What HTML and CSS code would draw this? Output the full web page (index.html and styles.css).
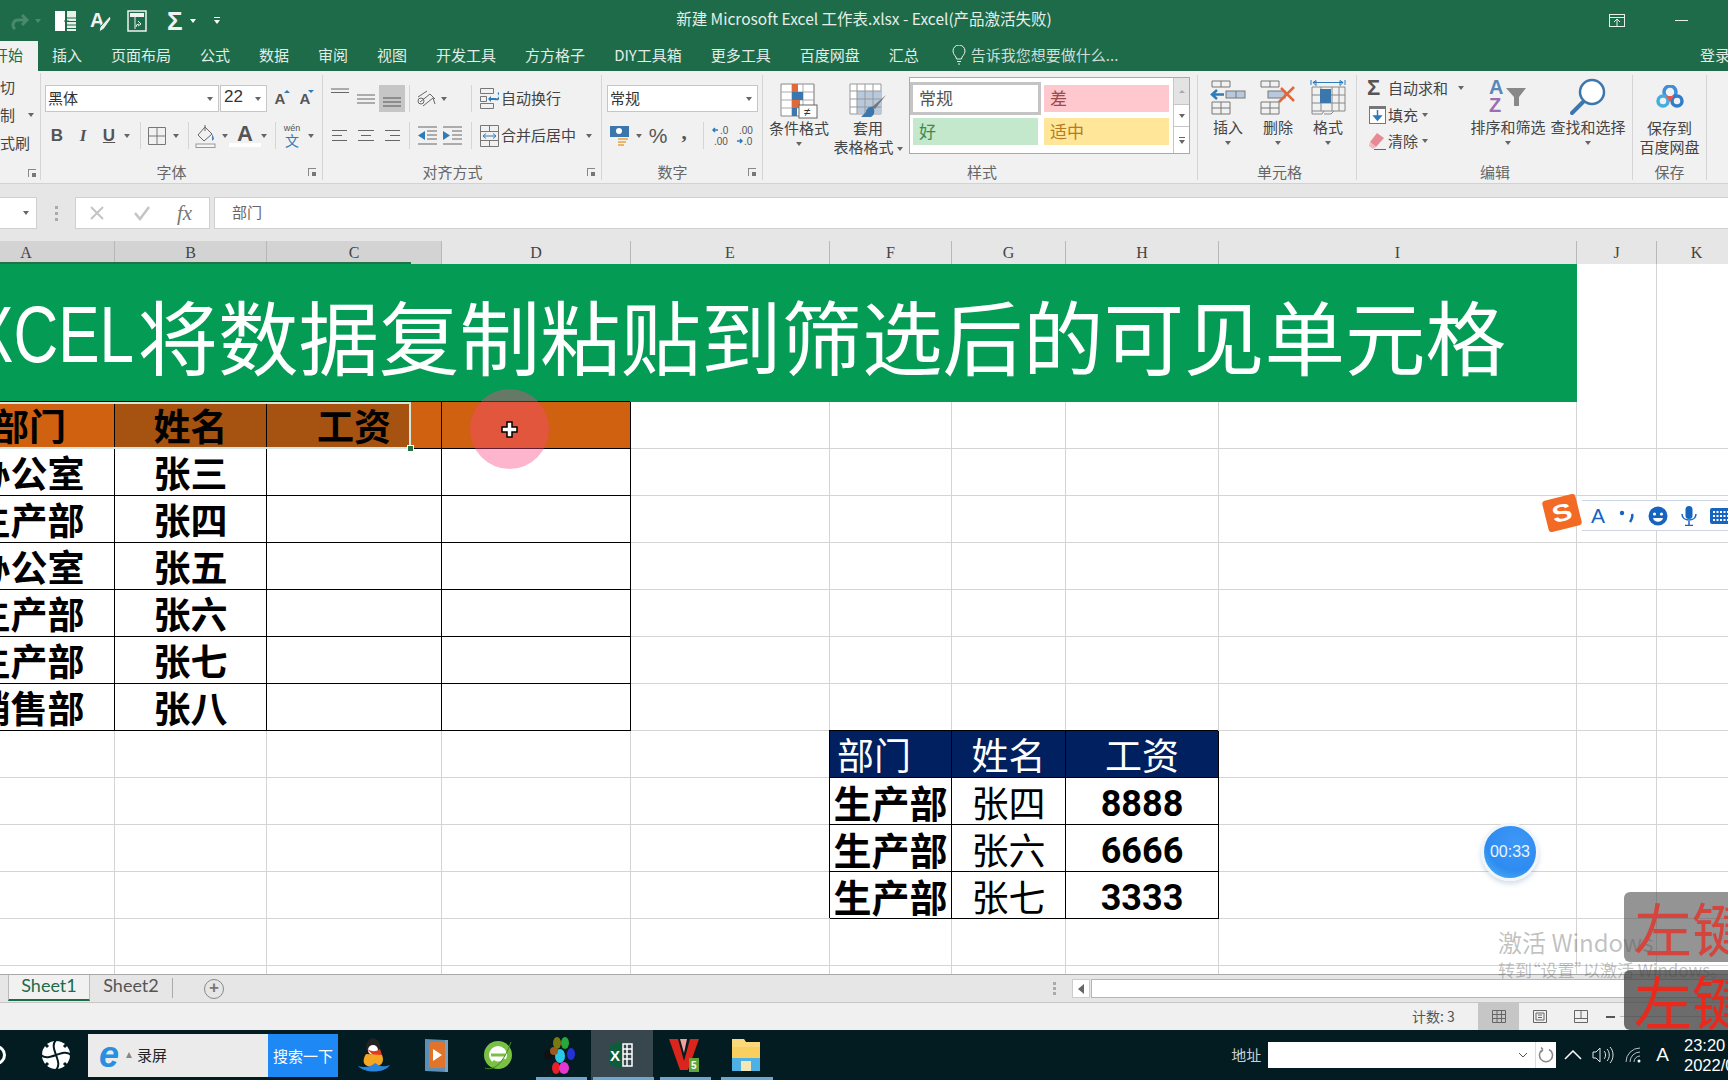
FILE: index.html
```html
<!DOCTYPE html>
<html lang="zh">
<head>
<meta charset="utf-8">
<title>新建 Microsoft Excel 工作表.xlsx - Excel</title>
<link rel="stylesheet" href="styles.css">
</head>
<body>
<header class="titlebar">
  <div class="qat">
    <svg class="q-redo" width="20" height="18" viewBox="0 0 20 18"><path d="M16 8H8a5 5 0 0 0-3 9M12 3l5 5-5 5" fill="none" stroke="#4a8a6c" stroke-width="3"/></svg>
    <i class="dd dd-faded q-ddf"></i>
    <svg class="q-ins" width="22" height="20" viewBox="0 0 22 20"><rect x="0" y="0" width="10" height="20" fill="#fff"/><rect x="12" y="0" width="9" height="20" fill="#e8f0ec"/><path d="M12 7h9M12 10.500h9M12 14h9M12 17.500h9" stroke="#1d6b48"/><path d="M9 10h5M11.500 7.500v5" stroke="#1d6b48"/></svg>
    <svg class="q-a" width="22" height="22" viewBox="0 0 22 22"><text x="0" y="17" class="q-atext">A</text><path d="M20 6 10 17l-1 5 5-3L21 9z" fill="#e8f0ec" stroke="#1d6b48"/></svg>
    <svg class="q-box" width="20" height="22" viewBox="0 0 20 22"><rect x="1" y="1" width="18" height="20" fill="none" stroke="#f2f2f2" stroke-width="1.500"/><rect x="3" y="3" width="14" height="4" fill="#f2f2f2"/><path d="M8 7v12M12 14a3 3 0 0 0-3 3M11 11l3 3-3 2" fill="none" stroke="#f2f2f2"/></svg>
    <span class="q-sigma">Σ</span>
    <i class="dd dd-white q-dd1"></i>
    <svg class="q-more" width="8" height="9" viewBox="0 0 8 9"><path d="M1 1.500h6" stroke="#fff"/><path d="M1 4l3 4 3-4z" fill="#fff"/></svg>
  </div>
  <div class="doc-title">新建 Microsoft Excel 工作表.xlsx - Excel(产品激活失败)</div>
  <div class="winctl">
    <svg width="16" height="13" viewBox="0 0 16 13"><rect x=".5" y=".5" width="15" height="12" fill="none" stroke="#e8f0ec"/><path d="M.5 3.500h15M8 12V5M5 8l3-3 3 3" fill="none" stroke="#e8f0ec"/></svg>
    <span class="w-min"></span>
  </div>
</header>
<nav class="tabs">
  <span class="tab-active">开始</span>
  <span>插入</span><span>页面布局</span><span>公式</span><span>数据</span><span>审阅</span><span>视图</span><span>开发工具</span><span>方方格子</span><span>DIY工具箱</span><span>更多工具</span><span>百度网盘</span><span>汇总</span>
  <span class="tell">
    <svg width="14" height="20" viewBox="0 0 14 20"><path d="M4.500 14c0-3-3.500-4-3.500-8a6 6 0 0 1 12 0c0 4-3.500 5-3.500 8zM5 16.500h4M6 19h2" fill="none" stroke="#e8f0ec"/></svg>
    告诉我您想要做什么...
  </span>
  <span class="login">登录</span>
</nav>

<section class="ribbon">
  <div class="grp g-clip">
    <div class="clip-row">切</div>
    <div class="clip-row">制<i class="dd clip-dd"></i></div>
    <div class="clip-row">式刷</div>
    <i class="launch launch-clip"></i>
  </div>

  <div class="grp g-font">
    <div class="row row1">
      <div class="combo c-font"><span>黑体</span><i class="dd"></i></div>
      <div class="combo c-size"><span>22</span><i class="dd"></i></div>
      <span class="s s26 glyph-a">A<i class="up"></i></span>
      <span class="s s24 glyph-a">A<i class="down"></i></span>
    </div>
    <div class="row row2">
      <span class="s s24 fmt b">B</span>
      <span class="s s28 fmt it">I</span>
      <span class="s s24 fmt un">U</span>
      <span class="s s12"><i class="dd"></i></span>
      <span class="s s14"><i class="vl"></i></span>
      <span class="s s20"><svg width="18" height="18" viewBox="0 0 18 18"><path d="M.5.500h17v17H.5zM9 .5v17M.5 9h17" fill="none" stroke="#777"/></svg></span>
      <span class="s s18"><i class="dd"></i></span>
      <span class="s s6"><i class="vl"></i></span>
      <span class="s s30"><svg width="22" height="24" viewBox="0 0 22 24"><path d="M10 3 3 11l6 6 8-7zM10 1v6" fill="none" stroke="#666"/><path d="M17 10c2 3 2 5 2 5l-2 2z" fill="#4f81bd"/><rect x="1" y="20" width="19" height="3.500" fill="#f5f5f5" stroke="#999"/></svg></span>
      <span class="s s8"><i class="dd"></i></span>
      <span class="s s32 font-a">A</span>
      <span class="s s6"><i class="dd"></i></span>
      <span class="s s16"><i class="vl"></i></span>
      <span class="s s18 wen"><small>wén</small><b>文</b></span>
      <span class="s s20"><i class="dd"></i></span>
    </div>
    <div class="glabel pr">字体<i class="launch"></i></div>
  </div>

  <div class="grp g-align">
    <div class="row row1">
      <span class="s s24"><svg width="18" height="12" viewBox="0 0 18 12" class="up7"><path d="M0 1h18M0 4.500h18" stroke="#666"/></svg></span>
      <span class="s s27"><svg width="18" height="12" viewBox="0 0 18 12"><path d="M0 2h18M0 6h18M0 10h18" stroke="#666"/></svg></span>
      <span class="s s26 on"><svg width="18" height="12" viewBox="0 0 18 12" class="down5"><path d="M0 3h18M0 7h18M0 11h18" stroke="#555"/></svg></span>
      <span class="s s8"><i class="vl"></i></span>
      <span class="s s26"><svg width="20" height="20" viewBox="0 0 20 20"><path d="M2 8l9-6M4 13 14 5M7 17l10-8 2 6M14 5l5 5" fill="none" stroke="#666"/><circle cx="5" cy="12" r="3" fill="none" stroke="#666"/></svg></span>
      <span class="s s10"><i class="dd"></i></span>
      <span class="s s14"></span>
      <span class="s s16"><i class="vl"></i></span>
      <span class="s s20"><svg width="19" height="22" viewBox="0 0 19 22"><path d="M.5.500h13v5H.5zM.5 8.500h6v5h-6zM.5 15.500h13v5H.5z" fill="none" stroke="#777"/><path d="M9 11h6a3 3 0 0 0 3-6" fill="none" stroke="#2d7bb8" stroke-width="2"/><path d="M11 8l-3 3 3 3" fill="#2d7bb8"/></svg></span>
      <span class="lbl">自动换行</span>
    </div>
    <div class="row row2">
      <span class="s s24"><svg width="16" height="11" viewBox="0 0 16 11"><path d="M0 .5h15M0 5.500h10M0 10.500h15" stroke="#666"/></svg></span>
      <span class="s s27"><svg width="16" height="11" viewBox="0 0 16 11"><path d="M0 .5h16M3 5.500h10M0 10.500h16" stroke="#666"/></svg></span>
      <span class="s s26"><svg width="16" height="11" viewBox="0 0 16 11"><path d="M1 .5h15M6 5.500h10M1 10.500h15" stroke="#666"/></svg></span>
      <span class="s s8"><i class="vl"></i></span>
      <span class="s s28"><svg width="19" height="19" viewBox="0 0 19 19"><path d="M0 1h19M9 5h10M9 9h10M9 13h10M0 18h19" stroke="#666"/><path d="M0 9.500 7 5v9z" fill="#2d7bb8"/></svg></span>
      <span class="s s22"><svg width="19" height="19" viewBox="0 0 19 19"><path d="M0 1h19M9 5h10M9 9h10M9 13h10M0 18h19" stroke="#666"/><path d="M7 9.500 0 5v9z" fill="#2d7bb8"/></svg></span>
      <span class="s s16"><i class="vl"></i></span>
      <span class="s s20"><svg width="19" height="22" viewBox="0 0 19 22"><path d="M.5.500h18v21H.5zM.5 6.500h18M.5 15.500h18M9.500 .5v6M9.500 15.500v6" fill="none" stroke="#777"/><path d="M3 11h13M6 8.500 3 11l3 2.500M13 8.500l3 2.500-3 2.500" fill="none" stroke="#2d7bb8"/></svg></span>
      <span class="lbl">合并后居中</span>
      <i class="dd dd-merge"></i>
    </div>
    <div class="glabel pr">对齐方式<i class="launch"></i></div>
  </div>

  <div class="grp g-num">
    <div class="row row1">
      <div class="combo c-num"><span>常规</span><i class="dd"></i></div>
    </div>
    <div class="row row2">
      <span class="s s26"><svg width="20" height="22" viewBox="0 0 20 22"><rect x="0" y="1" width="19" height="11" fill="#3b77ad"/><circle cx="9" cy="6" r="3" fill="#fff"/><path d="M8 14h10M8 17h8M8 20h6" stroke="#ecb56a" stroke-width="2"/></svg></span>
      <span class="s s12"><i class="dd"></i></span>
      <span class="s s26 pct">%</span>
      <span class="s s26 comma">,</span>
      <span class="s s12"><i class="vl"></i></span>
      <span class="s s24 dec"><svg width="18" height="22" viewBox="0 0 18 22"><path d="M6 5H1M3 3 1 5l2 2" fill="none" stroke="#2d7bb8" stroke-width="1.500"/><text x="8" y="9" class="dectext">.0</text><text x="2" y="20" class="dectext">.00</text></svg></span>
      <span class="s s24 dec"><svg width="18" height="22" viewBox="0 0 18 22"><text x="3" y="9" class="dectext">.00</text><path d="M1 16h5M4 14l2 2-2 2" fill="none" stroke="#2d7bb8" stroke-width="1.500"/><text x="8" y="20" class="dectext">.0</text></svg></span>
    </div>
    <div class="glabel pr">数字<i class="launch"></i></div>
  </div>

  <div class="grp g-style">
    <div class="style-row">
      <div class="bigbtn w64">
        <svg class="bigicon" width="38" height="36" viewBox="0 0 38 36"><path d="M1 1h33v32H1z" fill="#fff" stroke="#888"/><path d="M12 1v32M23 1v32M34 1v32M1 9h33M1 17h33M1 25h33" stroke="#aaa"/><rect x="12" y="1" width="6" height="8" fill="#e0693c"/><rect x="12" y="9" width="11" height="8" fill="#3b77ad"/><rect x="12" y="17" width="8" height="8" fill="#e0693c"/><rect x="12" y="25" width="5" height="8" fill="#3b77ad"/><rect x="19" y="22" width="18" height="13" fill="#fff" stroke="#666"/><text x="24" y="33" class="ne">≠</text></svg>
        <span>条件格式</span>
        <i class="dd dd-line"></i>
      </div>
      <div class="bigbtn w74">
        <svg class="bigicon" width="38" height="36" viewBox="0 0 38 36"><path d="M1 1h31v30H1z" fill="#fff" stroke="#999"/><rect x="8" y="8" width="24" height="23" fill="#b9c9dd"/><path d="M8 1v30M16 1v30M24 1v30M1 8h31M1 16h31M1 24h31" stroke="#999"/><path d="M37 12 26 26l-3-2z" fill="#777"/><path d="M24 24c-5-1-7 3-7 5l-5 5h10c4-2 4-7 2-10z" fill="#3b77ad"/></svg>
        <span>套用</span>
        <span>表格格式<i class="dd dd-inline"></i></span>
      </div>
      <div class="gallery">
        <div class="g-cells">
          <div class="cellstyle cs-normal">常规</div>
          <div class="cellstyle cs-bad">差</div>
          <div class="cellstyle cs-good">好</div>
          <div class="cellstyle cs-mid">适中</div>
        </div>
        <div class="g-scroll">
          <span class="gs1"><i class="dd dd-faded-up"></i></span>
          <span class="gs2"><i class="dd"></i></span>
          <span class="gs3"><svg width="8" height="9" viewBox="0 0 8 9"><path d="M1 1.500h6" stroke="#666"/><path d="M1 4l3 4 3-4z" fill="#666"/></svg></span>
        </div>
      </div>
    </div>
    <div class="glabel">样式</div>
  </div>

  <div class="grp g-cells-grp">
    <div class="style-row">
      <div class="bigbtn w50">
        <svg class="bigicon2" width="38" height="38" viewBox="0 0 38 38"><path d="M3 3h18v6H3zM12 3v6M3 24h18v12H3zM3 30h18M12 24v12" fill="none" stroke="#777"/><rect x="17" y="13" width="19" height="7" fill="#b9c9dd" stroke="#777"/><path d="M27 13v7" stroke="#777"/><path d="M15 16.500H5M8 12l-5 4.500L8 21" fill="none" stroke="#2d7bb8" stroke-width="2.500"/></svg>
        <span>插入</span><i class="dd dd-line"></i>
      </div>
      <div class="bigbtn w50">
        <svg class="bigicon2" width="38" height="38" viewBox="0 0 38 38"><path d="M2 3h18v6H2zM11 3v6M2 24h18v12H2zM2 30h18M11 24v12" fill="none" stroke="#777"/><rect x="9" y="13" width="17" height="7" fill="#b9c9dd" stroke="#777"/><path d="M22 10l13 13M35 9 20 24" stroke="#e0693c" stroke-width="2.500"/></svg>
        <span>删除</span><i class="dd dd-line"></i>
      </div>
      <div class="bigbtn w50">
        <svg class="bigicon2" width="38" height="38" viewBox="0 0 38 38"><path d="M2 2v5M36 2v5M4 4.500h30M4 4.500l3-2v5zM34 4.500l-3-2v5z" fill="none" stroke="#2d7bb8"/><path d="M3 9h33v24H3zM3 17h33M3 25h33M12 9v24M23 9v24M30 9v24" fill="none" stroke="#888"/><rect x="11" y="11" width="11" height="14" fill="#3b77ad"/><path d="M3 33v3h10l2-3M15 36h7l3-3" fill="none" stroke="#888"/></svg>
        <span>格式</span><i class="dd dd-line"></i>
      </div>
    </div>
    <div class="glabel">单元格</div>
  </div>

  <div class="grp g-edit">
    <div class="style-row">
      <div class="edit-col">
        <div class="edit-item"><span class="s s22 sigma">Σ</span><span>自动求和</span><i class="dd dd-auto"></i></div>
        <div class="edit-item"><span class="s s22"><svg width="17" height="18" viewBox="0 0 17 18"><rect x=".5" y=".5" width="16" height="17" fill="#fff" stroke="#777"/><rect x="1" y="1" width="15" height="2" fill="#777"/><path d="M8.500 4v9M5 10l3.500 4 3.500-4z" fill="#2d7bb8" stroke="#2d7bb8" stroke-width="1.500"/></svg></span><span>填充</span><i class="dd dd-after"></i></div>
        <div class="edit-item"><span class="s s22"><svg width="18" height="18" viewBox="0 0 18 18"><path d="M9 1l7 5-8 9-6-5z" fill="#e88a96"/><path d="M2 10l6 5-3 2-4-3z" fill="#f2b6bd"/><path d="M6 17.500h12" stroke="#666"/></svg></span><span>清除</span><i class="dd dd-after"></i></div>
      </div>
      <div class="bigbtn w80">
        <svg class="bigicon2 sorticon" width="40" height="38" viewBox="0 0 40 38"><text x="1" y="16" class="az az-a">A</text><text x="1" y="34" class="az az-z">Z</text><path d="M18 10h20l-7 9v9h-5v-9z" fill="#888"/></svg>
        <span>排序和筛选</span><i class="dd dd-line"></i>
      </div>
      <div class="bigbtn w80">
        <svg class="bigicon2" width="38" height="38" viewBox="0 0 38 38"><circle cx="23" cy="14" r="12" fill="#fff" stroke="#3b77ad" stroke-width="2.500"/><path d="M14 24 3 35" stroke="#3b77ad" stroke-width="4" stroke-linecap="round"/></svg>
        <span>查找和选择</span><i class="dd dd-line"></i>
      </div>
    </div>
    <div class="glabel">编辑</div>
  </div>

  <div class="grp g-save">
    <div class="bigbtn save">
      <svg class="saveicon" width="28" height="24" viewBox="0 0 28 24"><circle cx="14" cy="7" r="6" fill="none" stroke="#3f8fd8" stroke-width="3.500"/><circle cx="7" cy="16" r="5" fill="none" stroke="#45aee0" stroke-width="3.500"/><circle cx="21" cy="16" r="5" fill="none" stroke="#2f7ec9" stroke-width="3.500"/><path d="M10 11h8l-4 6z" fill="#e4584f"/></svg>
      <span>保存到</span>
      <span>百度网盘</span>
    </div>
    <div class="glabel">保存</div>
  </div>
</section>

<section class="formula">
  <div class="namebox"><i class="dd"></i></div>
  <div class="fdots"><i></i><i></i><i></i></div>
  <div class="fbtns">
    <svg width="16" height="16" viewBox="0 0 16 16"><path d="M2 2l12 12M14 2 2 14" stroke="#c4c4c4" stroke-width="2"/></svg>
    <svg width="18" height="16" viewBox="0 0 18 16"><path d="M2 8l5 6L16 2" fill="none" stroke="#c4c4c4" stroke-width="2.500"/></svg>
    <span class="fx">fx</span>
  </div>
  <div class="finput">部门</div>
</section>

<section class="colhdr">
  <span class="ch sel ch-a">A</span><span class="ch sel">B</span><span class="ch sel">C</span><span class="ch">D</span><span class="ch">E</span><span class="ch">F</span><span class="ch">G</span><span class="ch">H</span><span class="ch">I</span><span class="ch">J</span><span class="ch">K</span>
  <i class="colmark"></i>
</section>

<main class="sheet">
  <div class="cells">
    <div class="banner"><span class="ban-lat">EXCEL</span>将数据复制粘贴到筛选后的可见单元格</div>

    <div class="t th c1">部门</div><div class="t th dark">姓名</div><div class="t th dark part">工资</div><div class="t th"></div>
    <div class="t c1">办公室</div><div class="t">张三</div><div class="t"></div><div class="t"></div>
    <div class="t c1">生产部</div><div class="t">张四</div><div class="t"></div><div class="t"></div>
    <div class="t c1">办公室</div><div class="t">张五</div><div class="t"></div><div class="t"></div>
    <div class="t c1">生产部</div><div class="t">张六</div><div class="t"></div><div class="t"></div>
    <div class="t c1">生产部</div><div class="t">张七</div><div class="t"></div><div class="t"></div>
    <div class="t c1">销售部</div><div class="t">张八</div><div class="t"></div><div class="t"></div>

    <div class="table2">
      <div class="t navy navy-first">部门</div><div class="t navy">姓名</div><div class="t navy">工资</div>
      <div class="t dept">生产部</div><div class="t thin">张四</div><div class="t num">8888</div>
      <div class="t dept">生产部</div><div class="t thin">张六</div><div class="t num">6666</div>
      <div class="t dept">生产部</div><div class="t thin">张七</div><div class="t num">3333</div>
    </div>
  </div>
  <div class="selection"><i></i></div>
  <div class="spot"></div>
  <svg class="cursor" width="17" height="17" viewBox="0 0 17 17"><path d="M6 1h5v5h5v5h-5v5H6v-5H1V6h5z" fill="#fff" stroke="#000" stroke-width="1.500"/></svg>
</main>

<section class="sheetbar">
  <span class="sheet-tab active">Sheet1</span>
  <span class="sheet-tab">Sheet2</span>
  <i class="tab-sep"></i>
  <span class="addsheet">+</span>
  <span class="sb-dots"><i></i><i></i><i></i></span>
  <span class="sb-left"><i></i></span>
  <span class="sb-track"></span>
</section>

<section class="status">
  <span class="count">计数: 3</span>
  <span class="view on"><svg width="14" height="13" viewBox="0 0 14 13"><path d="M.5.500h13v12H.5zM.5 4.500h13M.5 8.500h13M5 .5v12M9.500 .5v12" fill="none" stroke="#666"/></svg></span>
  <span class="view"><svg width="14" height="13" viewBox="0 0 14 13"><path d="M.5.500h13v12H.5z" fill="none" stroke="#666"/><path d="M3 3h8v7H3zM5 5h4M5 7.500h4" fill="none" stroke="#666"/></svg></span>
  <span class="view"><svg width="14" height="13" viewBox="0 0 14 13"><path d="M.5.500h13v12H.5zM.5 8.500h13M7 .5v8" fill="none" stroke="#666"/></svg></span>
  <span class="zoom-minus"></span>
  <span class="zoom-line"></span>
</section>

<footer class="taskbar">
  <div class="start"></div>
  <svg class="swirl" width="30" height="30" viewBox="0 0 30 30"><circle cx="15" cy="15" r="14" fill="#fff"/><path d="M15 0C7 8 23 22 15 30M0 15c8 8 22-8 30 0" fill="none" stroke="#031c22" stroke-width="2"/><path d="M0 0l7 7M30 0l-7 7M0 30l7-7M30 30l-7-7" stroke="#031c22" stroke-width="3"/></svg>
  <div class="search">
    <span class="ie">e</span><i class="tri"></i>
    <span class="s-text">录屏</span>
    <span class="s-btn">搜索一下</span>
  </div>
  <div class="apps">
    <span class="app"><svg width="32" height="38" viewBox="0 0 32 38"><ellipse cx="15" cy="11" rx="7" ry="9" fill="#222"/><ellipse cx="15" cy="14" rx="5" ry="5" fill="#fff"/><path d="M9 13c6 3 8 3 13 0l2 6-6 3z" fill="#e53a1f"/><path d="M8 18c-5 8-2 13 7 13 8 0 12-5 9-12z" fill="#f5a623"/><path d="M0 30c6 7 26 8 32-1-8 3-12 0-15-2-4 4-11 5-17 3z" fill="#2a86dc"/></svg></span>
    <span class="app"><svg width="26" height="36" viewBox="0 0 26 36"><path d="M2 2l20 1v32L2 34z" fill="#5d8eb5"/><rect x="6" y="5" width="16" height="26" rx="2" fill="#e0742a"/><path d="M10 12l9 6-9 6z" fill="#fff"/><rect x="22" y="3" width="3" height="32" fill="#7aa2c2"/></svg></span>
    <span class="app"><svg width="30" height="34" viewBox="0 0 30 34"><circle cx="15" cy="17" r="14" fill="#79c043"/><circle cx="15" cy="17" r="9" fill="#fff"/><path d="M8 17h14M22 21c-3 5-9 5-12 2" stroke="#79c043" stroke-width="3" fill="none"/><path d="M2 30c8 3 18-3 26-26" stroke="#3e8c1e" fill="none"/></svg></span>
    <span class="app"><svg width="32" height="40" viewBox="0 0 32 40"><ellipse cx="13" cy="8" rx="4" ry="6" fill="#7b7a10"/><ellipse cx="21" cy="8" rx="4" ry="6" fill="#26a83b"/><ellipse cx="4" cy="20" rx="4" ry="5" fill="#111"/><ellipse cx="16" cy="21" rx="5" ry="7" fill="#29c7e8"/><ellipse cx="27" cy="19" rx="4" ry="6" fill="#2530d8"/><ellipse cx="10" cy="16" rx="4" ry="4" fill="#9a5a22"/><ellipse cx="12" cy="33" rx="4" ry="6" fill="#e9202a"/><ellipse cx="20" cy="33" rx="5" ry="6" fill="#e238d0"/></svg></span>
    <span class="app app-on"><svg width="28" height="32" viewBox="0 0 28 32"><path d="M2 6 14 2v28L2 26z" fill="#0d5c3c"/><text x="2" y="22" class="xl">X</text><path d="M15 5h9v22h-9zM15 10h9M15 15h9M15 20h9M19 5v22" fill="none" stroke="#fff" stroke-width="1.500"/></svg></span>
    <span class="app"><svg width="32" height="38" viewBox="0 0 32 38"><path d="M1 3h9l6 22 6-22h9L20 34h-8z" fill="#d9251c"/><path d="M12 3h7l-3 14z" fill="#f5a0a0"/><rect x="21" y="22" width="10" height="14" fill="#5ea63c"/><text x="23" y="33" class="v5">5</text></svg></span>
    <span class="app"><svg width="30" height="36" viewBox="0 0 30 36"><path d="M1 2h12l2 3h14v29H1z" fill="#fbd97a"/><rect x="1" y="10" width="28" height="24" fill="#f9cf5f"/><rect x="1" y="21" width="28" height="13" fill="#4fb0e3"/><path d="M10 24h10v10H10z" fill="#f3e6b7"/></svg></span>
  </div>
  <div class="marks"><i class="m1"></i><i class="m2"></i><i class="m3"></i><i class="m4"></i></div>
  <div class="tray">
    <span class="addr">地址</span>
    <div class="addrbox">
      <svg class="addr-chev" width="10" height="6" viewBox="0 0 10 6"><path d="M1 1l4 4 4-4" fill="none" stroke="#555"/></svg>
      <span class="addr-refresh"><svg width="16" height="16" viewBox="0 0 16 16"><path d="M5 2.500a6.500 6.500 0 1 0 6 0M5 2.500 3 .5M5 2.500 3 5" fill="none" stroke="#888" stroke-width="1.500"/></svg></span>
    </div>
    <svg class="tr-chev" width="18" height="10" viewBox="0 0 18 10"><path d="M1 9l8-8 8 8" fill="none" stroke="#fff" stroke-width="1.500"/></svg>
    <svg class="tr-vol" width="22" height="18" viewBox="0 0 22 18"><path d="M1 6h3l4-4v14l-4-4H1zM12 5c2 2 2 6 0 8M15 3c3 3 3 9 0 12M18 1c4 4 4 12 0 16" fill="none" stroke="#dfe5e6"/></svg>
    <svg class="tr-net" width="18" height="16" viewBox="0 0 18 16"><path d="M1 15A14 14 0 0 1 15 1M5 15A10 10 0 0 1 15 5M9 15a6 6 0 0 1 6-6" fill="none" stroke="#b6c2c4"/><circle cx="14" cy="14" r="1.500" fill="#fff"/></svg>
    <span class="ime">A</span>
    <span class="clock"><span>23:20</span><span>2022/0</span></span>
  </div>
</footer>

<div class="sogou">
  <span class="sg-logo"><b>S</b></span>
  <div class="sg-bar">
    <span class="sg-a">A</span>
    <svg width="16" height="14" viewBox="0 0 16 14"><circle cx="3" cy="4" r="2.200" fill="#1565c0"/><path d="M13 5c1 3 0 5-2 8" fill="none" stroke="#1565c0" stroke-width="2.500"/></svg>
    <svg width="20" height="20" viewBox="0 0 20 20"><circle cx="10" cy="10" r="9.500" fill="#1565c0"/><circle cx="6.500" cy="8" r="1.600" fill="#fff"/><circle cx="13.500" cy="8" r="1.600" fill="#fff"/><path d="M5 12h10c-1 5-9 5-10 0z" fill="#fff"/></svg>
    <svg width="16" height="20" viewBox="0 0 16 20"><rect x="4.500" y="0" width="7" height="13" rx="3.500" fill="#1565c0"/><path d="M1 8c0 8 14 8 14 0M8 15v4M4 19.500h8" fill="none" stroke="#1565c0" stroke-width="1.500"/></svg>
    <svg width="24" height="16" viewBox="0 0 24 16"><rect x="0" y="0" width="24" height="16" rx="2" fill="#1565c0"/><path d="M3 4h18M3 8h18M3 12h18" stroke="#fff" stroke-width="2" stroke-dasharray="2 1.500"/></svg>
  </div>
</div>

<div class="timer"><span>00:33</span></div>

<div class="watermark">
  <div class="wm1">激活 Windows</div>
  <div class="wm2">转到“设置”以激活 Windows。</div>
</div>
<div class="hint h1"><span>左键</span></div>
<div class="hint h2"><span>左键</span></div>
</body>
</html>
```

FILE: styles.css
```css
:root {
  --cols: 171px 152px 175px 189px 199px 122px 114px 153px 358px 80px 80px;
  --line: #d4d4d4;
  --cjk: "Noto Sans CJK SC", "Noto Sans", sans-serif;
}
* { box-sizing: border-box; }
html, body { margin: 0; padding: 0; }
body {
  position: relative;
  width: 1728px; height: 1080px; overflow: hidden;
  display: flex; flex-direction: column;
  font: 15px/1.2 var(--cjk);
  color: #444; background: #fff;
}
i { display: block; font-style: normal; }

/* dropdown triangle */
.dd { width: 0; height: 0; flex: none; border-left: 3.5px solid transparent; border-right: 3.5px solid transparent; border-top: 4px solid #666; }
.dd-white { border-top-color: #fff; }
.dd-faded { border-top-color: #4a8a6c; }

/* title */
.titlebar { height: 41px; flex: none; background: #1d6b48; display: grid; grid-template-columns: 1fr auto 1fr; align-items: center; }
.qat { display: flex; align-items: center; }
.q-redo { margin-left: 10px; }
.q-ddf { margin-left: 5px; }
.q-ins { margin-left: 14px; }
.q-a { margin-left: 13px; }
.q-atext { font: 700 20px "Liberation Sans", sans-serif; fill: #f2f2f2; }
.q-box { margin-left: 15px; }
.q-sigma { margin-left: 20px; font: 700 26px/1 "Liberation Sans", sans-serif; color: #f2f2f2; }
.q-dd1 { margin-left: 7px; }
.q-more { margin-left: 17px; }
.doc-title { color: #e6efe9; font-size: 15.500px; white-space: nowrap; padding-bottom: 4px; }
.winctl { display: flex; align-items: center; justify-content: flex-end; gap: 50px; padding-right: 40px; }
.w-min { width: 13px; height: 1px; background: #e8f0ec; }

/* tabs */
.tabs { height: 30px; flex: none; background: #1d6b48; color: #e3ede8; display: flex; align-items: flex-end; gap: 29px; position: relative; white-space: nowrap; }
.tabs > span { line-height: 27px; height: 30px; }
.tab-active { width: 38px; margin-right: -15px; background: #f1f1f1; color: #1d6b48; text-align: right; padding-right: 15px; direction: rtl; }
.tell { display: flex; align-items: center; gap: 5px; margin-left: 4px; color: #cfdcd5; font-size: 15px; padding-bottom: 3px; }
.login { margin-left: auto; margin-right: -2px; }

/* ribbon */
.ribbon { height: 113px; flex: none; background: #f1f1f1; border-bottom: 1px solid #d2d2d2; display: flex; align-items: flex-start; padding-top: 4px; }
.grp { height: 105px; flex: none; border-right: 1px solid #d5d5d5; position: relative; display: flex; flex-direction: column; }
.g-clip { width: 41px; margin-top: -2px; height: 107px; }
.g-font { width: 282px; padding-left: 4px; }
.g-align { width: 279px; padding-left: 5px; }
.g-num { width: 161px; padding-left: 5px; }
.g-style { width: 435px; padding-left: 4px; }
.g-cells-grp { width: 159px; padding-left: 5px; }
.g-edit { width: 276px; padding-left: 1px; }
.g-save { width: 74px; }
.clip-row { height: 28px; line-height: 28px; display: flex; align-items: center; white-space: nowrap; }
.clip-dd { margin-left: 13px; }
.row { display: flex; align-items: center; height: 27px; flex: none; }
.row1 { margin-top: 10px; }
.row2 { margin-top: 10px; }
.s { display: flex; align-items: center; justify-content: center; flex: none; height: 27px; }
.s6 { width: 6px; } .s8 { width: 8px; } .s10 { width: 10px; } .s12 { width: 12px; } .s14 { width: 14px; }
.s16 { width: 16px; } .s18 { width: 18px; } .s20 { width: 20px; } .s22 { width: 22px; } .s24 { width: 24px; }
.s26 { width: 26px; } .s27 { width: 27px; } .s28 { width: 28px; } .s30 { width: 30px; } .s32 { width: 32px; }
.vl { width: 1px; height: 27px; background: #d5d5d5; }
.on { background: #c6c6c6; }
.up7 { margin-top: -9px; }
.down5 { margin-top: 5px; }
.lbl { margin-left: 2px; white-space: nowrap; padding-bottom: 2px; }
.dd-merge { margin-left: 10px; }
.combo { height: 27px; background: #fff; border: 1px solid #c6c6c6; display: flex; align-items: center; justify-content: space-between; padding: 0 5px 2px 2px; font-size: 15px; color: #333; }
.combo .dd { margin-top: 2px; }
.c-font { width: 174px; }
.c-size { width: 47px; margin-left: 1px; padding-left: 3px; padding-right: 5px; font-family: "Liberation Sans", sans-serif; font-size: 17px; }
.c-num { width: 151px; }
.glyph-a { font: 700 15px "Liberation Sans", sans-serif; color: #555; position: relative; }
.glyph-a .up, .glyph-a .down { position: absolute; top: 5px; right: 3px; width: 0; height: 0; border-left: 3px solid transparent; border-right: 3px solid transparent; }
.glyph-a .up { border-bottom: 3px solid #2d7bb8; }
.glyph-a .down { border-top: 3px solid #2d7bb8; }
.fmt { font: 700 17px "Liberation Sans", sans-serif; color: #555; }
.it { font-style: italic; font-family: "Liberation Serif", serif; }
.un { text-decoration: underline; }
.font-a { font: 700 22px "Liberation Sans", sans-serif; color: #555; border-bottom: 4px solid #fff; height: 23px; }
.wen { flex-direction: column; font-size: 11px; color: #555; line-height: 1; }
.wen small { font-size: 9px; font-family: "Liberation Sans", sans-serif; }
.wen b { font-weight: 400; font-size: 14px; color: #2d7bb8; }
.pct { font: 400 21px "Liberation Sans", sans-serif; color: #555; }
.comma { font: 700 21px/1 "Liberation Serif", serif; color: #555; padding-bottom: 7px; }
.dectext { font: 400 10px "Liberation Sans", sans-serif; fill: #555; }
.glabel { margin-top: auto; margin-bottom: -2px; height: 20px; line-height: 20px; text-align: center; color: #666; position: relative; }
.pr { padding-right: 24px; }
.launch { position: absolute; right: 6px; top: 6px; width: 8px; height: 8px; border-left: 1px solid #888; border-top: 1px solid #888; }
.launch::after { content: ""; position: absolute; right: 0; bottom: 0; width: 4px; height: 4px; background: #777; }
.launch-clip { top: 96px; right: 4px; }

.style-row { display: flex; align-items: flex-start; }
.bigbtn { flex: none; display: flex; flex-direction: column; align-items: center; line-height: 19px; white-space: nowrap; }
.w50 { width: 50px; } .w64 { width: 64px; } .w74 { width: 74px; } .w80 { width: 80px; }
.bigicon { margin-top: 8px; margin-bottom: -1px; }
.bigicon2 { margin-top: 3px; margin-bottom: 1px; }
.dd-line { margin-top: 5px; }
.dd-inline { display: inline-block; margin-left: 3px; vertical-align: 2px; }
.ne { font: 400 12px "Liberation Sans", sans-serif; fill: #333; }
.gallery { margin-left: 4px; margin-top: 2px; width: 281px; height: 77px; border: 1px solid #aaa; background: #fff; display: flex; }
.g-cells { width: 263px; display: grid; grid-template-columns: 125px 125px; grid-auto-rows: 27px; column-gap: 6px; row-gap: 6px; padding: 7px 0 0 3px; align-content: start; }
.cellstyle { font-size: 17px; line-height: 25px; padding-left: 6px; }
.cs-normal { background: #fff; outline: 3px solid #c4c4c4; color: #555; }
.cs-bad { background: #ffc7ce; color: #9c4a4a; }
.cs-good { background: #c3e8cb; color: #3f8a50; }
.cs-mid { background: #ffe699; color: #b87a1e; }
.g-scroll { flex: 1; display: flex; flex-direction: column; border-left: 1px solid #c6c6c6; }
.g-scroll span { display: flex; align-items: center; justify-content: center; }
.gs1 { height: 26px; background: #e3e3e3; }
.gs2 { height: 23px; border-top: 1px solid #c6c6c6; border-bottom: 1px solid #c6c6c6; }
.gs3 { flex: 1; }
.dd-faded-up { border-top: 0; border-bottom: 3px solid #aaa; }
.edit-col { width: 110px; flex: none; }
.edit-item { height: 26.500px; display: flex; align-items: center; white-space: nowrap; padding-left: 8px; }
.sigma { font: 700 22px "Liberation Sans", sans-serif; color: #555; justify-content: flex-start; padding-left: 1px; }
.dd-auto { margin-left: 10px; }
.dd-after { margin-left: 4px; }
.az { font: 700 20px "Liberation Sans", sans-serif; }
.az-a { fill: #5b86b8; }
.az-z { fill: #9a6eb0; }
.saveicon { margin-top: 10px; margin-bottom: 9px; }

/* formula bar */
.formula { height: 57px; flex: none; background: #e6e6e6; display: flex; padding: 13px 0 12px; }
.namebox { width: 37px; background: #fff; border: 1px solid #d0d0d0; border-left: 0; display: flex; align-items: center; justify-content: flex-end; padding-right: 7px; }
.fdots { width: 38px; display: flex; flex-direction: column; align-items: center; justify-content: center; gap: 3px; }
.fdots i { width: 3px; height: 3px; background: #aaa; }
.fbtns { width: 135px; background: #fff; border: 1px solid #d0d0d0; display: flex; align-items: center; padding-left: 13px; gap: 28px; }
.fx { font: italic 400 21px "Liberation Serif", serif; color: #777; margin-left: -2px; }
.finput { flex: 1; margin-left: 4px; background: #fff; border: 1px solid #d0d0d0; border-right: 0; padding-left: 17px; line-height: 28px; font-size: 15px; color: #666; }

/* column headers */
.colhdr { height: 23px; flex: none; background: #e6e6e6; margin-left: -56px; display: grid; grid-template-columns: var(--cols); position: relative; }
.ch { font: 400 16px/23px "Liberation Serif", serif; text-align: center; color: #444; border-right: 1px solid #b8b8b8; }
.ch.sel { background: #d3d3d3; }
.ch-a { padding-right: 6px; }
.colmark { position: absolute; left: 0; width: 467px; bottom: 0; height: 2px; background: #217346; }

/* sheet */
.sheet {
  height: 710px; flex: none; position: relative; overflow: hidden; background-color: #fff;
  background-image:
    repeating-linear-gradient(to bottom, transparent 0 46px, var(--line) 46px 47px),
    linear-gradient(var(--line) 0 0), linear-gradient(var(--line) 0 0), linear-gradient(var(--line) 0 0),
    linear-gradient(var(--line) 0 0), linear-gradient(var(--line) 0 0), linear-gradient(var(--line) 0 0),
    linear-gradient(var(--line) 0 0), linear-gradient(var(--line) 0 0), linear-gradient(var(--line) 0 0),
    linear-gradient(var(--line) 0 0);
  background-repeat: no-repeat;
  background-size: 100% 572px, 1px 100%, 1px 100%, 1px 100%, 1px 100%, 1px 100%, 1px 100%, 1px 100%, 1px 100%, 1px 100%, 1px 100%;
  background-position: 0 138px, 114px 0, 266px 0, 441px 0, 630px 0, 829px 0, 951px 0, 1065px 0, 1218px 0, 1576px 0, 1656px 0;
}
.cells { margin-left: -56px; display: grid; grid-template-columns: var(--cols); grid-template-rows: 138px; grid-auto-rows: 47px; }
.banner { grid-column: 1 / 10; background: #049b55; color: #fff; font-size: 80.500px; line-height: 140px; white-space: nowrap; display: flex; justify-content: flex-end; padding-right: 71px; overflow: hidden; }
.ban-lat { font-family: "Liberation Sans", sans-serif; display: inline-block; transform: scaleX(.77); transform-origin: right center; margin-right: 4px; }
.t { border-right: 1px solid #000; border-bottom: 1px solid #000; box-shadow: -1px -1px 0 #000; font-weight: 700; font-size: 37px; line-height: 46px; color: #000; text-align: center; white-space: nowrap; }
.c1 { grid-column: 1; }
.th { background: #d06110; }
.dark { background: #a65210; }
.part { background: linear-gradient(to right, #a65210 143px, #d06110 143px); }
.table2 { grid-column: 6 / 9; grid-row: 9 / 13; display: grid; grid-template-columns: 122px 114px 153px; grid-auto-rows: 47px; }
.navy { background: #002060; color: #fff; font-weight: 400; }
.navy-first { text-align: left; padding-left: 7px; }
.dept { font-size: 38px; line-height: 48px; }
.thin { font-weight: 400; line-height: 48px; }
.num { font-family: "Roboto", sans-serif; font-size: 36px; line-height: 52px; }
.selection { position: absolute; left: -4px; top: 138px; width: 415px; height: 47px; border: 2px solid #d5e6dc; }
.selection i { position: absolute; right: -5px; bottom: -5px; width: 7px; height: 7px; background: #217346; border: 1px solid #fff; }
.spot { position: absolute; left: 470px; top: 125px; width: 79px; height: 80px; border-radius: 50%; background: rgba(250, 70, 130, .4); }
.cursor { position: absolute; left: 501px; top: 157px; }

/* sheet tabs */
.sheetbar { height: 29px; flex: none; background: #e6e6e6; border-top: 1px solid #a8a8a8; border-bottom: 1px solid #c6c6c6; display: flex; align-items: stretch; position: relative; padding-left: 8px; }
.sheet-tab { width: 82px; text-align: center; font: 18px/21px "Lato", sans-serif; color: #555; height: 25px; }
.sheet-tab.active { background: #f1f1f1; color: #1d6b48; border-bottom: 2px solid #1d6b48; border-left: 1px solid #bbb; border-right: 1px solid #bbb; height: 26px; }
.tab-sep { width: 1px; height: 20px; background: #aaa; margin: 3px 0 0 0; }
.addsheet { width: 20px; height: 20px; margin: 4px 0 0 31px; border: 1.500px solid #888; border-radius: 50%; font: 700 17px/16px "Liberation Sans", sans-serif; text-align: center; color: #777; }
.sb-dots { margin-left: 829px; width: 4px; display: flex; flex-direction: column; gap: 2px; justify-content: center; }
.sb-dots i { width: 3px; height: 3px; background: #aaa; }
.sb-left { width: 18px; height: 19px; margin: 4px 0 0 15px; background: #fff; border: 1px solid #ccc; display: flex; align-items: center; justify-content: center; }
.sb-left i { width: 0; height: 0; border-top: 5px solid transparent; border-bottom: 5px solid transparent; border-right: 6px solid #666; }
.sb-track { flex: 1; height: 19px; margin: 4px 0 0 1px; background: #fff; border: 1px solid #b5b5b5; border-right: 0; }

/* status */
.status { height: 27px; flex: none; background: #f0f0f0; display: flex; align-items: center; padding-left: 1412px; }
.count { width: 66px; color: #555; font-size: 14px; white-space: nowrap; }
.view { width: 41px; height: 27px; display: flex; align-items: center; justify-content: center; }
.view.on { background: #c6c6c6; }
.zoom-minus { width: 9px; height: 2px; background: #555; margin-left: 5px; }
.zoom-line { flex: 1; height: 1px; background: #bbb; margin-left: 5px; }

/* taskbar */
.taskbar { height: 50px; flex: none; background: #031c22; display: flex; align-items: center; position: relative; }
.start { width: 10px; height: 20px; margin-left: -4px; border: 3px solid #fff; border-left: 0; border-radius: 0 12px 12px 0; }
.swirl { margin-left: 35px; }
.search { margin-left: 17px; width: 250px; height: 43px; background: #ebebeb; display: flex; align-items: center; }
.ie { width: 30px; margin-left: 6px; font: italic 700 36px/40px "Liberation Sans", sans-serif; color: #2a8fe0; text-align: center; }
.tri { width: 0; height: 0; margin-left: 2px; border-left: 3.500px solid transparent; border-right: 3.500px solid transparent; border-bottom: 6px solid #888; }
.s-text { margin-left: 5px; font-size: 15px; color: #222; }
.s-btn { margin-left: auto; width: 70px; height: 43px; background: #1e88f5; color: #fff; text-align: center; font-size: 15px; line-height: 43px; white-space: nowrap; }
.apps { display: flex; margin-left: 5px; height: 50px; }
.app { width: 62px; height: 50px; display: flex; align-items: center; justify-content: center; }
.app-on { background: #37474d; }
.xl { font: 700 15px "Liberation Sans", sans-serif; fill: #fff; }
.v5 { font: 700 10px "Liberation Sans", sans-serif; fill: #fff; }
.marks { position: absolute; left: 0; bottom: 0; width: 800px; height: 3px; }
.marks i { position: absolute; bottom: 0; height: 3px; background: #6da7cf; }
.m1 { left: 536px; width: 51px; } .m2 { left: 593px; width: 61px; } .m3 { left: 660px; width: 51px; } .m4 { left: 721px; width: 52px; }
.tray { margin-left: auto; display: flex; align-items: center; color: #dfe5e6; white-space: nowrap; }
.addr { color: #c7d2d3; font-size: 15px; margin-right: 7px; }
.addrbox { width: 288px; height: 26px; background: #fff; display: flex; align-items: center; justify-content: flex-end; }
.addr-chev { margin-right: 7px; }
.addr-refresh { width: 21px; height: 26px; border-left: 1px solid #ddd; display: flex; align-items: center; justify-content: center; }
.tr-chev { margin-left: 8px; flex: none; }
.tr-vol { margin-left: 10px; flex: none; }
.tr-net { margin-left: 11px; flex: none; }
.ime { font: 400 19px "Liberation Sans", sans-serif; margin-left: 13px; color: #fff; }
.clock { width: 60px; margin-left: 15px; margin-right: -16px; display: flex; flex-direction: column; font: 16.500px/20px "Liberation Sans", sans-serif; color: #fff; overflow: hidden; }

/* floating */
.sogou { position: absolute; left: 1543px; top: 495px; display: flex; align-items: flex-start; width: 185px; }
.sg-logo { width: 34px; height: 32px; margin: 2px 0 0 2px; background: #f26a24; border-radius: 3px; transform: rotate(-14deg); color: #fff; display: flex; align-items: center; justify-content: center; font: 700 30px/1 "Liberation Sans", sans-serif; flex: none; }
.sg-logo b { transform: scaleY(.8); }
.sg-bar { margin: 5px 0 0 3px; height: 31px; flex: 1; background: #fff; border: 1px solid #cbd7e6; border-width: 1px 0; display: flex; align-items: center; gap: 13px; padding-left: 9px; overflow: hidden; }
.sg-bar svg { flex: none; }
.sg-a { font: 400 21px "Liberation Sans", sans-serif; color: #1565c0; margin-right: 1px; }
.timer { position: absolute; left: 1481px; top: 823px; width: 58px; height: 58px; border-radius: 50%; background: radial-gradient(circle at 60% 30%, #3d97f7, #2e8bf0 60%, #57bdf6); border: 3px solid #f0f5fa; box-shadow: 0 3px 5px rgba(80, 120, 160, .25); display: flex; align-items: center; justify-content: center; color: #e8f4ff; font: 16px "Liberation Sans", sans-serif; }
.watermark { position: absolute; left: 1498px; top: 925px; white-space: nowrap; color: rgba(90, 90, 90, .38); }
.wm1 { font-size: 24px; line-height: 34px; }
.wm2 { font-size: 17px; line-height: 22px; font-feature-settings: "palt"; }
.hint { position: absolute; left: 1624px; width: 104px; overflow: hidden; border-radius: 6px 0 0 6px; font-size: 58px; line-height: 1; white-space: nowrap; padding-left: 10px; display: flex; align-items: center; }
.h1 { top: 892px; height: 70px; background: rgba(90, 90, 90, .65); color: #d4453e; }
.h2 { top: 970px; height: 60px; background: rgba(70, 70, 70, .78); color: #e8291c; }
```
